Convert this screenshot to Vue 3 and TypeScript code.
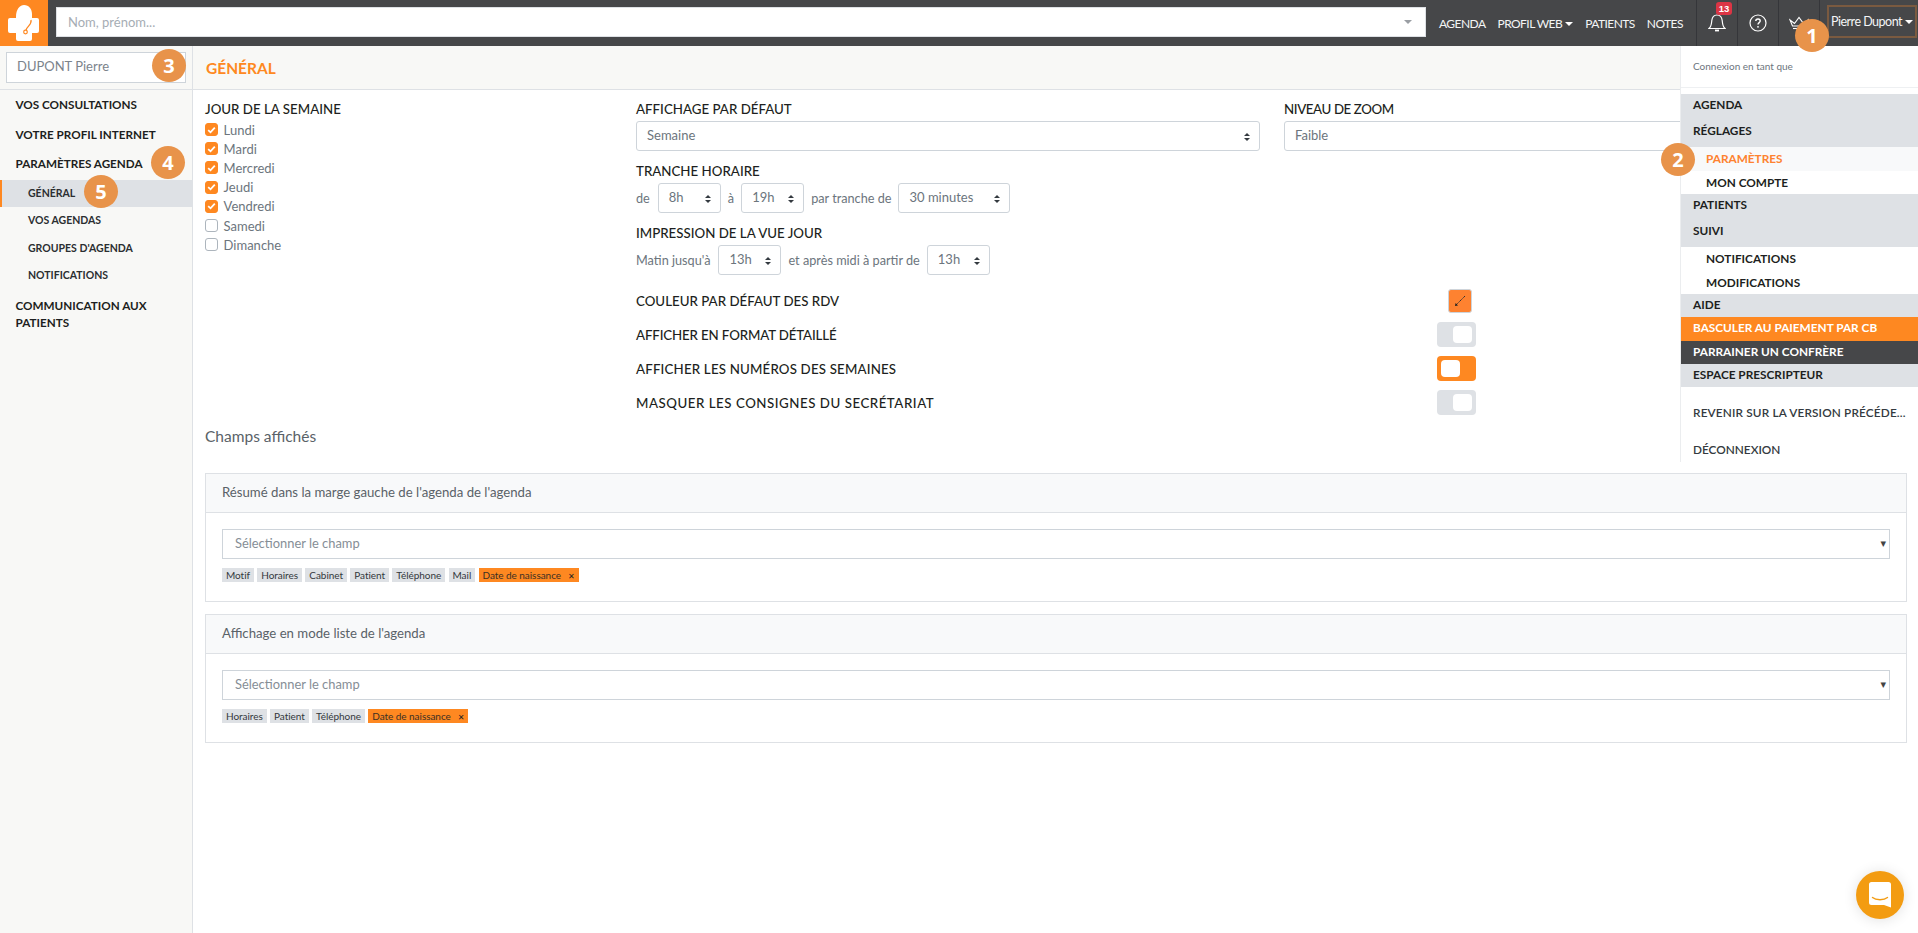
<script setup lang="ts">
const days = [
  { label: 'Lundi', on: true },
  { label: 'Mardi', on: true },
  { label: 'Mercredi', on: true },
  { label: 'Jeudi', on: true },
  { label: 'Vendredi', on: true },
  { label: 'Samedi', on: false },
  { label: 'Dimanche', on: false },
]
const subItems = [
  { label: 'GÉNÉRAL', active: true },
  { label: 'VOS AGENDAS', active: false },
  { label: "GROUPES D'AGENDA", active: false },
  { label: 'NOTIFICATIONS', active: false },
]
const toggles = [
  { label: 'AFFICHER EN FORMAT DÉTAILLÉ', on: false, track: -0.14 },
  { label: 'AFFICHER LES NUMÉROS DES SEMAINES', on: true, track: 0.17 },
  { label: 'MASQUER LES CONSIGNES DU SECRÉTARIAT', on: false, track: 0.52 },
]
const cards = [
  { title: "Résumé dans la marge gauche de l'agenda de l'agenda", chips: ['Motif', 'Horaires', 'Cabinet', 'Patient', 'Téléphone', 'Mail'] },
  { title: "Affichage en mode liste de l'agenda", chips: ['Horaires', 'Patient', 'Téléphone'] },
]
</script>

<template>
  <div class="page">
    <header class="topbar">
      <div class="logo">
        <svg width="34" height="36" viewBox="0 0 34 36">
          <path fill="#fff" d="M10 14 C10 6 14 2 18 2 C23 2 26 6 26 11 L26 15 L31 15 Q33 15 33 17 L33 28 Q33 30 31 30 L26 30 L26 36 Q26 38 24 38 L12 38 Q10 38 10 36 L10 30 L4 30 Q2 30 2 28 L2 17 Q2 15 4 15 L10 15 Z" transform="translate(-1 -2)" />
          <path fill="none" stroke="#fe8821" stroke-width="1.3" d="M24 15 C25 20 20 21 19 25" />
          <circle cx="18.5" cy="27" r="1.8" fill="none" stroke="#fe8821" stroke-width="1.2" />
        </svg>
      </div>
      <div class="search">
        <span>Nom, prénom...</span>
        <i class="caret grey"></i>
      </div>
      <nav class="nav">
        <a>AGENDA</a>
        <a>PROFIL WEB<i class="caret white"></i></a>
        <a>PATIENTS</a>
        <a>NOTES</a>
      </nav>
      <div class="iconcell">
        <svg width="18" height="20" viewBox="0 0 18 20" fill="none" stroke="#fff" stroke-width="1.2">
          <path d="M1 15.5 C3.5 13.5 3.5 10 3.8 7.5 C4.2 4 6 2 9 2 C12 2 13.8 4 14.2 7.5 C14.5 10 14.5 13.5 17 15.5 Z" />
          <path d="M7 17.5 L11 17.5" stroke-width="1.8" />
        </svg>
        <span class="badge">13</span>
      </div>
      <div class="iconcell">
        <svg width="18" height="18" viewBox="0 0 18 18" fill="none" stroke="#fff" stroke-width="1.2">
          <circle cx="9" cy="9" r="8" />
          <path d="M6.8 7 C6.8 4.4 11.2 4.4 11.2 7 C11.2 8.6 9 8.6 9 10.4" stroke-width="1.4" />
          <circle cx="9" cy="12.8" r="0.9" fill="#fff" stroke="none" />
        </svg>
      </div>
      <div class="iconcell">
        <svg width="20" height="14" viewBox="0 0 20 14" fill="none" stroke="#fff" stroke-width="1.1">
          <path d="M1 4 L5.5 7.5 L10 1.5 L14.5 7.5 L19 4 L16.5 10 L3.5 10 Z" />
          <path d="M4 12.5 L16 12.5" />
        </svg>
      </div>
      <div class="usercell">
        <div class="user">Pierre Dupont<i class="caret white"></i></div>
      </div>
    </header>

    <div class="body">
      <aside class="sidebar">
        <div class="side-head">
          <div class="side-search">DUPONT Pierre</div>
        </div>
        <div class="side-item">VOS CONSULTATIONS</div>
        <div class="side-item">VOTRE PROFIL INTERNET</div>
        <div class="side-item">PARAMÈTRES AGENDA</div>
        <div v-for="s in subItems" :key="s.label" class="side-sub" :class="{ active: s.active }">{{ s.label }}</div>
        <div class="side-item multi">COMMUNICATION AUX PATIENTS</div>
      </aside>

      <main class="main">
        <div class="main-head"><h1>GÉNÉRAL</h1></div>
        <div class="content">
          <div class="form">
            <div class="col-days">
              <div class="label">JOUR DE LA SEMAINE</div>
              <div v-for="d in days" :key="d.label" class="day">
                <span class="check" :class="{ on: d.on }">
                  <svg v-if="d.on" width="9" height="8" viewBox="0 0 9 8" fill="none" stroke="#fff" stroke-width="1.8"><path d="M1.2 4.2 L3.5 6.3 L7.8 1.6" /></svg>
                </span>
                {{ d.label }}
              </div>
            </div>
            <div class="col-main">
              <div class="two">
                <div class="col-display">
                  <div class="label">AFFICHAGE PAR DÉFAUT</div>
                  <div class="select full">Semaine<i class="updown"></i></div>
                  <div class="label mt">TRANCHE HORAIRE</div>
                  <div class="inline">
                    <span>de</span>
                    <div class="select small">8h<i class="updown"></i></div>
                    <span>à</span>
                    <div class="select small">19h<i class="updown"></i></div>
                    <span>par tranche de</span>
                    <div class="select wide">30 minutes<i class="updown"></i></div>
                  </div>
                  <div class="label mt">IMPRESSION DE LA VUE JOUR</div>
                  <div class="inline">
                    <span>Matin jusqu'à</span>
                    <div class="select small">13h<i class="updown"></i></div>
                    <span>et après midi à partir de</span>
                    <div class="select small">13h<i class="updown"></i></div>
                  </div>
                </div>
                <div class="col-zoom">
                  <div class="label">NIVEAU DE ZOOM</div>
                  <div class="select full">Faible<i class="updown"></i></div>
                </div>
              </div>
              <div class="setting first">
                <span class="label">COULEUR PAR DÉFAUT DES RDV</span>
                <span class="swatch">
                  <svg width="14" height="14" viewBox="0 0 14 14" fill="none" stroke="#333" stroke-width="1"><path d="M12 2 L3 11" stroke-dasharray="1.4 0.5" /><path d="M2 12 L2.6 9 L5 11.4 Z" fill="#222" stroke="none" /></svg>
                </span>
              </div>
              <div v-for="t in toggles" :key="t.label" class="setting">
                <span class="label" :style="{ letterSpacing: t.track + 'px' }">{{ t.label }}</span>
                <span class="toggle" :class="{ on: t.on }"><span class="knob"></span></span>
              </div>
            </div>
          </div>

          <h2>Champs affichés</h2>

          <section v-for="c in cards" :key="c.title" class="card">
            <div class="card-head">{{ c.title }}</div>
            <div class="card-body">
              <div class="combo">Sélectionner le champ<span class="tri">▾</span></div>
              <div class="chips">
                <span v-for="chip in c.chips" :key="chip" class="chip">{{ chip }}</span>
                <span class="chip orange">Date de naissance<b>✕</b></span>
              </div>
            </div>
          </section>
        </div>
      </main>
    </div>

    <div class="menu">
      <div class="menu-user">Connexion en tant que</div>
      <div class="menu-group g1">AGENDA</div>
      <div class="menu-group g2">RÉGLAGES</div>
      <div class="menu-sub current">PARAMÈTRES</div>
      <div class="menu-sub">MON COMPTE</div>
      <div class="menu-group g1">PATIENTS</div>
      <div class="menu-group g2">SUIVI</div>
      <div class="menu-sub">NOTIFICATIONS</div>
      <div class="menu-sub">MODIFICATIONS</div>
      <div class="menu-group g1">AIDE</div>
      <div class="menu-group g1 cb">BASCULER AU PAIEMENT PAR CB</div>
      <div class="menu-group g1 dark">PARRAINER UN CONFRÈRE</div>
      <div class="menu-group g1">ESPACE PRESCRIPTEUR</div>
      <div class="menu-link first">REVENIR SUR LA VERSION PRÉCÉDE...</div>
      <div class="menu-link">DÉCONNEXION</div>
    </div>

    <span class="mark m1">1</span>
    <span class="mark m2">2</span>
    <span class="mark m3">3</span>
    <span class="mark m4">4</span>
    <span class="mark m5">5</span>

    <div class="chat">
      <svg width="22" height="26" viewBox="0 0 22 26">
        <path fill="#fff" d="M2.5 0 H19.5 Q22 0 22 2.5 V25.5 L15 23 H2.5 Q0 23 0 20.5 V2.5 Q0 0 2.5 0 Z" />
        <path fill="none" stroke="#f39c12" stroke-width="1.4" stroke-linecap="round" d="M3.5 15.5 C7 18.5 15 18.5 18.5 15.5" />
      </svg>
    </div>
  </div>
</template>

<style scoped>
.page {
  position: relative;
  height: 933px;
  overflow: hidden;
  font-family: Lato, "Open Sans", sans-serif;
  font-size: 14px;
  color: #6c757d;
}

.topbar {
  display: flex;
  align-items: stretch;
  height: 46px;
  background: #464749;
}
.logo {
  width: 48px;
  background: #fe8821;
  display: flex;
  align-items: center;
  justify-content: center;
}
.search {
  width: 1370px;
  height: 30px;
  margin: 7px 0 0 8px;
  padding: 0 11px;
  box-sizing: border-box;
  background: #fff;
  border: 1px solid #dee1e5;
  display: flex;
  align-items: center;
  justify-content: space-between;
  color: #a6adb4;
  font-size: 13px;
}
.caret {
  display: inline-block;
  width: 0;
  height: 0;
  border-left: 4px solid transparent;
  border-right: 4px solid transparent;
  border-top: 4px solid #fff;
}
.caret.grey { border-top-color: #9a9ea3; margin-right: 2px; }
.caret.white { margin-left: 3px; vertical-align: 2px; }
.nav {
  display: flex;
  align-items: center;
  gap: 12px;
  padding-left: 13px;
  width: 270px;
  box-sizing: border-box;
  color: #f4f5f6;
  font-size: 12px;
  letter-spacing: -0.55px;
  white-space: nowrap;
}
.iconcell {
  position: relative;
  width: 41px;
  display: flex;
  align-items: center;
  justify-content: center;
  border-left: 1px solid #35363a;
  box-sizing: border-box;
}
.badge {
  position: absolute;
  left: 19px;
  top: 2px;
  width: 16px;
  height: 13px;
  border-radius: 3px;
  background: #dc3545;
  color: #fff;
  font-size: 9.5px;
  font-weight: 700;
  line-height: 13px;
  text-align: center;
  font-family: "Liberation Sans", sans-serif;
}
.usercell {
  flex: 1;
  display: flex;
  border-left: 1px solid #35363a;
  padding: 5px 1px 8px 7px;
}
.user {
  flex: 1;
  display: flex;
  align-items: center;
  justify-content: center;
  border: 2px solid #7a5a40;
  color: #f4f5f6;
  font-size: 12.5px;
  letter-spacing: -0.5px;
  white-space: nowrap;
}

.body { display: flex; height: 887px; }
.sidebar {
  width: 193px;
  flex: none;
  box-sizing: border-box;
  background: #f8f8f6;
  border-right: 1px solid #dee1e5;
  color: #1d1f21;
}
.side-head {
  height: 44px;
  box-sizing: border-box;
  padding: 6px 6px 0;
  border-bottom: 1px solid #dee1e5;
}
.side-search {
  height: 31px;
  box-sizing: border-box;
  padding-left: 10px;
  line-height: 27px;
  background: #fff;
  border: 1px solid #ced4da;
  color: #7b838b;
  font-size: 13px;
}
.side-item {
  padding: 0 8px 0 15.5px;
  height: 29.5px;
  line-height: 29px;
  font-size: 11.7px;
  font-weight: 700;
  white-space: nowrap;
}
.side-item.multi {
  height: auto;
  line-height: 17px;
  margin-top: 7px;
  width: 150px;
  white-space: normal;
}
.side-sub {
  height: 27.6px;
  line-height: 27.6px;
  padding-left: 28px;
  font-size: 10.5px;
  font-weight: 700;
  color: #2b2e31;
}
.side-sub.active {
  margin-top: 1px;
  background: #dee1e5;
  box-shadow: inset 2px 0 0 #fe8821;
}

.main { flex: 1; min-width: 0; }
.main-head {
  height: 44px;
  box-sizing: border-box;
  background: #f8f8f6;
  border-bottom: 1px solid #dee1e5;
  padding-left: 13px;
}
.main-head h1 {
  margin: 0;
  color: #fe8821;
  font-size: 15.5px;
  font-weight: 700;
  line-height: 44px;
}
.content { padding: 11px 11px 0 12px; }
.form { display: grid; grid-template-columns: 431px 1fr; }
.label {
  color: #1d1f21;
  font-size: 13.3px;
  font-weight: 500;
  line-height: 16px;
  white-space: nowrap;
}
.col-zoom .label { letter-spacing: -0.4px; }
.day {
  display: flex;
  align-items: center;
  gap: 5.6px;
  height: 19.2px;
  font-size: 13px;
}
.col-days .label { margin-bottom: 3px; }
.check {
  width: 13px;
  height: 13px;
  box-sizing: border-box;
  border: 1px solid #adb5bd;
  border-radius: 3px;
  background: #fff;
  display: flex;
  align-items: center;
  justify-content: center;
}
.check.on { background: #fe8821; border-color: #fe8821; }
.two { display: flex; gap: 24px; }
.col-display { width: 624px; flex: none; }
.col-zoom { flex: 1; }
.mt { margin-top: 12px; }
.select {
  position: relative;
  box-sizing: border-box;
  height: 30px;
  line-height: 27px;
  padding-left: 10px;
  margin-top: 4px;
  border: 1px solid #ced4da;
  border-radius: 3px;
  background: #fff;
  color: #6c757d;
  font-size: 13px;
}
.updown {
  position: absolute;
  right: 9px;
  top: 11px;
  width: 0;
  height: 0;
  border-left: 3px solid transparent;
  border-right: 3px solid transparent;
  border-bottom: 3.5px solid #343a40;
}
.updown::after {
  content: "";
  position: absolute;
  left: -3px;
  top: 4.5px;
  width: 0;
  height: 0;
  border-left: 3px solid transparent;
  border-right: 3px solid transparent;
  border-top: 3.5px solid #343a40;
}
.inline {
  display: flex;
  align-items: center;
  gap: 7px;
  font-size: 12.7px;
}
.inline .select { flex: none; margin-top: 4px; }
.inline span { margin-top: 3px; }
.inline span:first-child { margin-right: 1px; }
.small { width: 63px; }
.wide { width: 112px; }
.setting {
  display: flex;
  align-items: center;
  justify-content: space-between;
  width: 840px;
  height: 34px;
}
.setting.first { margin-top: 9px; }
.swatch {
  width: 24px;
  height: 24px;
  margin: -1px 4px 0 0;
  box-sizing: border-box;
  border: 1px solid #ced4da;
  border-radius: 3px;
  background: #fe8230;
  display: flex;
  align-items: center;
  justify-content: center;
}
.toggle {
  width: 39px;
  height: 25px;
  margin-top: -2px;
  padding: 4px 4px;
  box-sizing: border-box;
  border-radius: 4px;
  background: #dee1e5;
  display: flex;
  justify-content: flex-end;
}
.toggle.on { background: #fe8821; justify-content: flex-start; }
.knob {
  width: 19px;
  height: 17px;
  border-radius: 4px;
  background: #fff;
}
h2 {
  margin: 6px 0 27px;
  color: #5a6268;
  font-size: 15.5px;
  font-weight: 400;
  line-height: 20px;
}
.card {
  border: 1px solid #dee1e5;
  margin-bottom: 12px;
  height: 129px;
  box-sizing: border-box;
}
.card-head {
  height: 39px;
  line-height: 36px;
  box-sizing: border-box;
  padding-left: 16px;
  background: #f8f9fa;
  border-bottom: 1px solid #dee1e5;
  color: #5a6268;
  font-size: 13.2px;
}
.card-body { padding: 16px 16px 0; }
.combo {
  position: relative;
  height: 30px;
  line-height: 27px;
  box-sizing: border-box;
  padding-left: 12px;
  border: 1px solid #ced4da;
  color: #868e96;
  font-size: 12.9px;
}
.tri {
  position: absolute;
  right: 3px;
  top: 0;
  color: #444;
  font-size: 11px;
  font-family: "DejaVu Sans", sans-serif;
}
.chips {
  display: flex;
  gap: 3.3px;
  margin-top: 9px;
}
.chip {
  height: 14px;
  line-height: 14px;
  padding: 0 4px;
  background: #dee1e5;
  color: #33383c;
  font-size: 10px;
  letter-spacing: -0.05px;
}
.chip.orange {
  background: #fe8821;
  color: #3c3024;
}
.chip b { margin-left: 7px; font-size: 8px; font-family: "DejaVu Sans", sans-serif; color: #222; }

.menu {
  position: absolute;
  top: 46px;
  left: 1680px;
  width: 238px;
  height: 416px;
  background: #fff;
  border-left: 1px solid #ebedef;
  box-sizing: border-box;
  color: #1d1f21;
  font-size: 11.8px;
  font-weight: 700;
}
.menu-user {
  height: 41px;
  line-height: 41px;
  padding-left: 12px;
  border-bottom: 1px solid #eef0f2;
  margin-bottom: 6px;
  color: #6c757d;
  font-size: 10px;
  font-weight: 400;
}
.menu-group { padding-left: 12px; background: #dee1e5; }
.g1 { height: 23px; line-height: 22px; }
.g2 { height: 30px; line-height: 28px; }
.menu-sub { height: 23.5px; line-height: 23.5px; padding-left: 25px; }
.current { background: #f8f9fa; color: #fe8230; }
.cb { background: #fe8821; color: #fff; height: 24px; }
.dark { background: #464749; color: #fff; }
.menu-link { height: 37px; line-height: 37px; padding-left: 12px; font-weight: 600; color: #343a40; white-space: nowrap; }
.menu-link.first { margin-top: 7px; letter-spacing: 0.15px; }

.mark {
  position: absolute;
  width: 34px;
  height: 33px;
  border-radius: 50%;
  background: #e8934a;
  color: #fff;
  font-size: 20px;
  font-weight: 700;
  line-height: 33px;
  text-align: center;
  font-family: "Open Sans", sans-serif;
}
.m1 { left: 1795px; top: 19px; }
.m2 { left: 1661px; top: 143px; }
.m3 { left: 152px; top: 49px; }
.m4 { left: 151px; top: 146px; }
.m5 { left: 84px; top: 175px; }

.chat {
  position: absolute;
  left: 1856px;
  top: 871px;
  width: 48px;
  height: 48px;
  border-radius: 50%;
  background: #f39c12;
  box-shadow: 0 1px 14px rgba(0, 0, 0, 0.12);
  display: flex;
  align-items: center;
  justify-content: center;
}
</style>

<style>
html, body { margin: 0; background: #fff; }
</style>
